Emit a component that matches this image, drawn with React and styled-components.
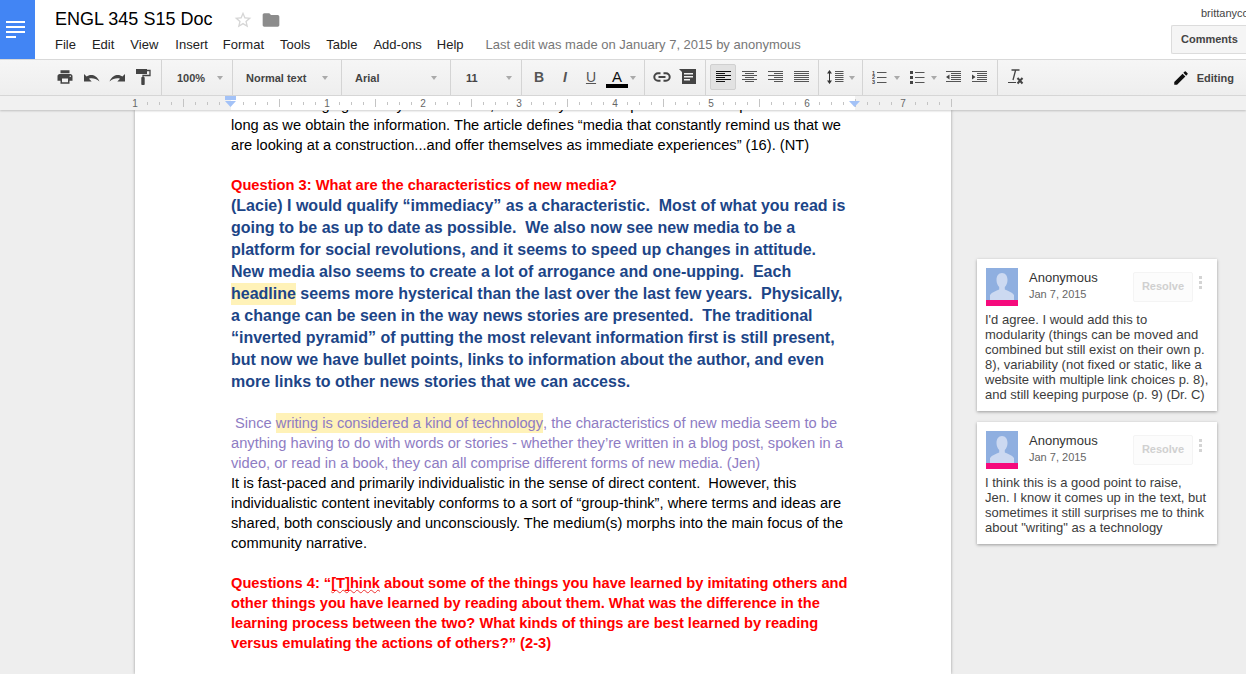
import React from 'react';
import styled, { createGlobalStyle } from 'styled-components';
import { MdPrint, MdEdit, MdStarBorder, MdFolder } from 'react-icons/md';

const GlobalStyle = createGlobalStyle`
  html, body {
    margin: 0;
    height: 100%;
    overflow: hidden;
    background: #eee;
    font-family: "Liberation Sans", Arial, sans-serif;
  }
`;

const Shell = styled.div`
  display: flex;
  flex-direction: column;
  height: 100vh;
`;

const Header = styled.header`
  display: flex;
  height: 59px;
  background: #fff;
  border-bottom: 1px solid #d9d9d9;
  flex: none;
`;

const DocsTile = styled.div`
  width: 35px;
  background: #4285f4;
  display: flex;
  flex-direction: column;
  justify-content: center;
  gap: 3px;
  padding-left: 6px;
  box-sizing: border-box;
`;

const TileLine = styled.span`
  display: block;
  height: 2px;
  width: ${(p) => p.$w}px;
  background: #fff;
`;

const TitleArea = styled.div`
  padding: 6px 0 0 20px;
  flex: 1;
`;

const TitleRow = styled.div`
  display: flex;
  align-items: center;
  height: 27px;
`;

const DocTitle = styled.div`
  font-size: 18px;
  color: #000;
  width: 178px;
`;

const Star = styled(MdStarBorder)`
  color: #d6d6d6;
`;

const Folder = styled(MdFolder)`
  color: #8c8c8c;
  margin-left: 8px;
`;

const MenuRow = styled.nav`
  display: flex;
  align-items: center;
  margin-top: 4px;
  font-size: 13px;
  color: #222;
`;

const MenuItem = styled.span`
  margin-right: ${(p) => p.$gap}px;
`;

const LastEdit = styled.span`
  color: #777;
  margin-left: 7px;
`;

const Account = styled.div`
  width: 75px;
  overflow: hidden;
`;

const UserName = styled.div`
  font-size: 11px;
  color: #444;
  white-space: nowrap;
  margin: 7px 0 0 30px;
  height: 18px;
`;

const CommentsButton = styled.div`
  box-sizing: border-box;
  height: 29px;
  background: #f5f5f5;
  border: 1px solid #dcdcdc;
  border-right: 0;
  border-radius: 2px 0 0 2px;
  font-size: 11px;
  font-weight: bold;
  color: #444;
  line-height: 27px;
  padding-left: 9px;
`;

const Toolbar = styled.div`
  display: flex;
  height: 36px;
  flex: none;
  box-sizing: border-box;
  padding-left: 52px;
  background: linear-gradient(#f6f6f6, #eeeeee);
  border-bottom: 1px solid #d9d9d9;
  color: #444;
`;

const Group = styled.div`
  display: flex;
  align-items: center;
  padding: 0 ${(p) => p.$right ?? 5}px 0 ${(p) => p.$left ?? 4}px;
  border-right: 1px solid ${(p) => (p.$plain ? 'transparent' : '#d4d4d4')};
`;

const IconButton = styled.div`
  box-sizing: border-box;
  width: 26px;
  height: 26px;
  margin-top: -1px;
  display: flex;
  align-items: center;
  justify-content: center;
  font-size: ${(p) => p.$size || 18}px;
  color: #444;
  border-radius: 2px;
  border: 1px solid ${(p) => (p.$active ? '#d0d0d0' : 'transparent')};
  background: ${(p) => (p.$active ? '#e2e2e2' : 'transparent')};
`;

const Select = styled.div`
  display: flex;
  align-items: center;
  justify-content: space-between;
  width: ${(p) => p.$w}px;
  box-sizing: border-box;
  padding: 0 ${(p) => p.$pr}px 0 ${(p) => p.$pl}px;
  font-size: 11px;
  font-weight: bold;
  color: #444;
`;

const Caret = styled.span`
  display: block;
  flex: none;
  width: 0;
  height: 0;
  margin: ${(p) => p.$m || '0'};
  border-left: 3.5px solid transparent;
  border-right: 3.5px solid transparent;
  border-top: 4px solid #aaa;
`;

const FormatLetter = styled.span`
  font-size: 14px;
  font-weight: ${(p) => (p.$bold ? 'bold' : 'normal')};
  font-style: ${(p) => (p.$italic ? 'italic' : 'normal')};
  text-decoration: ${(p) => (p.$under ? 'underline' : 'none')};
  color: #555;
`;

const ColorLetter = styled.span`
  display: block;
  width: 22px;
  text-align: center;
  font-size: 15px;
  line-height: 15px;
  color: #111;
  border-bottom: 4px solid #000;
  margin-top: 2px;
`;

const EditMode = styled.div`
  margin-left: auto;
  display: flex;
  align-items: center;
  gap: 7px;
  padding-right: 12px;
  font-size: 11px;
  font-weight: bold;
  color: #444;
`;

const RulerBar = styled.div`
  height: 14px;
  flex: none;
  background: #f1f1f1;
  position: relative;
  z-index: 2;
  box-shadow: 0 1px 2px rgba(0, 0, 0, 0.2);
`;

const Workspace = styled.main`
  flex: 1;
  min-height: 0;
  display: flex;
  overflow: hidden;
  padding-left: 135px;
  background: #eee;
`;

const Page = styled.article`
  width: 816px;
  flex: none;
  box-sizing: border-box;
  padding-left: 96px;
  background: #fff;
  box-shadow: 0 0 3px rgba(0, 0, 0, 0.35);
  overflow: hidden;
`;

const Para = styled.p`
  margin: ${(p) => p.$top || 0}px 0 0;
  font-size: ${(p) => (p.$big ? 16 : 14.67)}px;
  line-height: ${(p) => (p.$big ? 22 : 20)}px;
  font-weight: ${(p) => (p.$bold ? 'bold' : 'normal')};
  color: ${(p) => p.$color || '#000'};
  white-space: pre;
`;

const Mark = styled.span`
  display: inline-block;
  background: #fff2b8;
`;

const Misspelled = styled.span`
  text-decoration: underline wavy #e33;
  text-decoration-thickness: 1px;
  text-decoration-skip-ink: none;
`;

const CommentRail = styled.aside`
  display: flex;
  flex-direction: column;
  align-items: flex-start;
  gap: 11px;
  padding: 149px 0 0 26px;
`;

const Card = styled.div`
  box-sizing: border-box;
  width: 240px;
  background: #fff;
  padding: 9px 8px 9px;
  box-shadow: 0 1px 3px rgba(0, 0, 0, 0.35);
`;

const CardHead = styled.div`
  display: flex;
  align-items: flex-start;
  height: 38px;
  padding-left: 1px;
`;

const Avatar = styled.div`
  width: 32px;
  height: 38px;
  flex: none;
  border-bottom: 6px solid #f50a7c;
  box-sizing: border-box;
  background: #8fafe0;
  line-height: 0;
`;

const Author = styled.div`
  margin-left: 11px;
  width: 104px;
`;

const AuthorName = styled.div`
  font-size: 13px;
  line-height: 18px;
  margin-top: 1px;
  color: #333;
`;

const CommentDate = styled.div`
  font-size: 11px;
  line-height: 15px;
  color: #666;
`;

const ResolveButton = styled.div`
  box-sizing: border-box;
  width: 60px;
  height: 30px;
  margin-top: 4px;
  border: 1px solid #f4f4f4;
  border-radius: 2px;
  background: #fcfcfc;
  color: #d0d0d0;
  font-size: 11px;
  font-weight: bold;
  line-height: 26px;
  text-align: center;
`;

const MoreDots = styled.div`
  display: flex;
  flex-direction: column;
  gap: 2px;
  margin: 8px 0 0 6px;
`;

const Dot = styled.span`
  width: 3px;
  height: 3px;
  background: #d4d4d4;
`;

const CommentBody = styled.div`
  margin-top: 6px;
  font-size: 13px;
  line-height: 15px;
  color: #3c3c3c;
  white-space: pre;
`;

const rulerMarks = [];
for (let i = 0; i <= 68; i++) rulerMarks.push(135 + i * 12);
const rulerNumbers = [[135, 1], [327, 1], [423, 2], [519, 3], [615, 4], [711, 5], [807, 6], [903, 7]];

function Ruler() {
  return (
    <RulerBar>
      <svg width="1246" height="14">
        <rect x="231" y="0" width="624" height="14" fill="#fff" />
        {rulerMarks.map((x, i) => {
          if (i % 8 === 0) return null;
          const tall = i % 4 === 0;
          return (
            <line key={x} x1={x + 0.5} x2={x + 0.5} y1={tall ? 3 : 6} y2={tall ? 11 : 9} stroke="#c4c4c4" />
          );
        })}
        <line x1="951.5" x2="951.5" y1="3" y2="11" stroke="#c4c4c4" />
        {rulerNumbers.map(([x, n], i) => (
          <text key={i} x={x} y="11" fontSize="10" fill="#666" textAnchor="middle" fontFamily="Liberation Sans">{n}</text>
        ))}
        <rect x="225" y="0" width="11" height="4" fill="#a3c2f7" />
        <path d="M225 5h11l-5.500 6z" fill="#a3c2f7" />
        <path d="M849 5h11l-5.500 6z" fill="#a3c2f7" />
      </svg>
    </RulerBar>
  );
}

// rows of thin bars, each one [x, width]
function Bars({ rows, color = '#555' }) {
  return (
    <svg width="15" height="12" viewBox="0 0 15 12">
      {rows.map(([x, w], i) => (
        <rect key={i} x={x} y={i * 2} width={w} height="1" fill={color} />
      ))}
    </svg>
  );
}

const alignLeft = [[0, 15], [0, 9], [0, 15], [0, 9], [0, 15], [0, 9]];
const alignCenter = [[0, 15], [3, 9], [0, 15], [3, 9], [0, 15], [3, 9]];
const alignRight = [[0, 15], [6, 9], [0, 15], [6, 9], [0, 15], [6, 9]];
const alignFull = [[0, 15], [0, 15], [0, 15], [0, 15], [0, 15], [0, 15]];

function UndoIcon({ flip }) {
  return (
    <svg width="17" height="9" viewBox="0 0 17 9" transform={flip ? 'scale(-1 1)' : undefined}>
      <path d="M1 8.500V1l2.600 2.500C6.500 1.300 13 0.500 16.500 8.500 13 5.300 8.500 4.700 6 5.700L8.700 8.500z" fill="#444" />
    </svg>
  );
}

function RollerIcon() {
  return (
    <svg width="15" height="16" viewBox="0 0 15 16">
      <rect x="0" y="0" width="11" height="5" fill="#444" />
      <path d="M11 1.500h3v5H7v2" stroke="#444" strokeWidth="1.300" fill="none" />
      <rect x="5.300" y="8" width="3.400" height="8" rx="0.800" fill="#444" />
    </svg>
  );
}

function LinkIcon() {
  return (
    <svg width="18" height="10" viewBox="0 0 18 10">
      <path d="M7.500 1.300H5a3.700 3.700 0 000 7.400h2.500M10.500 1.300H13a3.700 3.700 0 010 7.400h-2.500M5.500 5h7" stroke="#444" strokeWidth="2" fill="none" />
    </svg>
  );
}

function CommentBoxIcon() {
  return (
    <svg width="18" height="16" viewBox="0 0 18 16">
      <path d="M0 0h17v15H3V3z" fill="#444" />
      <path d="M5 4h9v1.500H5zM5 7h9v1.500H5zM5 10h6v1.500H5z" fill="#f2f2f2" />
    </svg>
  );
}

function LineSpacingIcon() {
  return (
    <svg width="17" height="14" viewBox="0 0 17 14">
      <path d="M0 3.500L2.500 0 5 3.500zM0 10.500L2.500 14 5 10.500z" fill="#333" />
      <rect x="2" y="3" width="1" height="8" fill="#333" />
      {[1, 3, 5, 7, 9, 11].map((y) => (
        <rect key={y} x="8" y={y} width="8.500" height="1" fill="#555" />
      ))}
    </svg>
  );
}

function NumberedIcon() {
  return (
    <svg width="15" height="14" viewBox="0 0 15 14">
      {[1, 2, 3].map((n) => (
        <text key={n} x="0" y={n * 4.500} fontSize="5.500" fontWeight="bold" fill="#444" fontFamily="Liberation Sans">{n}</text>
      ))}
      {[2, 7, 12].map((y) => (
        <rect key={y} x="5" y={y} width="9.500" height="1" fill="#555" />
      ))}
    </svg>
  );
}

function BulletedIcon() {
  return (
    <svg width="15" height="14" viewBox="0 0 15 14">
      {[1, 6, 11].map((y) => (
        <rect key={y} x="0" y={y} width="3" height="3" fill="#444" />
      ))}
      {[2, 7, 12].map((y) => (
        <rect key={y} x="5" y={y} width="9.500" height="1" fill="#555" />
      ))}
    </svg>
  );
}

function IndentIcon({ increase }) {
  return (
    <svg width="15" height="12" viewBox="0 0 15 12">
      <path d={increase ? 'M0 3.500L3.500 6 0 8.500z' : 'M3.500 3.500L0 6l3.500 2.500z'} fill="#444" />
      <rect x="0" y="0" width="15" height="1" fill="#555" />
      {[2, 4, 6, 8].map((y) => (
        <rect key={y} x="5" y={y} width="10" height="1" fill="#555" />
      ))}
      <rect x="0" y="10" width="15" height="1" fill="#555" />
    </svg>
  );
}

function ClearFormatIcon() {
  return (
    <svg width="18" height="16" viewBox="0 0 18 16">
      <path d="M4.500 1h8M8.500 1.500L6 11" stroke="#444" strokeWidth="1.300" fill="none" />
      <path d="M1 13.500h8" stroke="#444" strokeWidth="1" />
      <path d="M10.500 9l5 5.500M15.500 9l-5 5.500" stroke="#444" strokeWidth="2" />
    </svg>
  );
}

function PersonIcon() {
  return (
    <svg width="32" height="32" viewBox="0 0 32 32">
      <path d="M16 5c3.600 0 5.500 3 5.500 7 0 3-1.200 5.500-2.700 7v2.500c3 1.500 7.200 2.500 9.200 5.500v5H4v-5c2-3 6.200-4 9.200-5.500V19c-1.500-1.500-2.700-4-2.700-7 0-4 1.900-7 5.500-7z" fill="#ccd9f1" />
    </svg>
  );
}

const comments = [
  {
    id: 1,
    text: "I'd agree. I would add this to\nmodularity (things can be moved and\ncombined but still exist on their own p.\n8), variability (not fixed or static, like a\nwebsite with multiple link choices p. 8),\nand still keeping purpose (p. 9) (Dr. C)",
  },
  {
    id: 2,
    text: 'I think this is a good point to raise,\nJen. I know it comes up in the text, but\nsometimes it still surprises me to think\nabout "writing" as a technology',
  },
];

const menus = [['File', 16], ['Edit', 16], ['View', 17], ['Insert', 15], ['Format', 16], ['Tools', 16], ['Table', 16], ['Add-ons', 15], ['Help', 15]];

export default function App() {
  return (
    <Shell>
      <GlobalStyle />
      <Header>
        <DocsTile>
          <TileLine $w={19} />
          <TileLine $w={19} />
          <TileLine $w={19} />
          <TileLine $w={10} />
        </DocsTile>
        <TitleArea>
          <TitleRow>
            <DocTitle>ENGL 345 S15 Doc</DocTitle>
            <Star size={20} />
            <Folder size={20} />
          </TitleRow>
          <MenuRow>
            {menus.map(([name, gap]) => (
              <MenuItem key={name} $gap={gap}>{name}</MenuItem>
            ))}
            <LastEdit>Last edit was made on January 7, 2015 by anonymous</LastEdit>
          </MenuRow>
        </TitleArea>
        <Account>
          <UserName>brittanycoombs</UserName>
          <CommentsButton>Comments</CommentsButton>
        </Account>
      </Header>

      <Toolbar>
        <Group $left={0}>
          <IconButton><MdPrint /></IconButton>
          <IconButton><UndoIcon /></IconButton>
          <IconButton><UndoIcon flip /></IconButton>
          <IconButton><RollerIcon /></IconButton>
        </Group>
        <Group $left={0} $right={0}>
          <Select $w={70} $pl={15} $pr={9}>100%<Caret /></Select>
        </Group>
        <Group $left={0} $right={0}>
          <Select $w={108} $pl={13} $pr={13}>Normal text<Caret /></Select>
        </Group>
        <Group $left={0} $right={0}>
          <Select $w={108} $pl={13} $pr={13}>Arial<Caret /></Select>
        </Group>
        <Group $left={0} $right={0}>
          <Select $w={70} $pl={15} $pr={9}>11<Caret /></Select>
        </Group>
        <Group>
          <IconButton><FormatLetter $bold>B</FormatLetter></IconButton>
          <IconButton><FormatLetter $bold $italic>I</FormatLetter></IconButton>
          <IconButton><FormatLetter $under>U</FormatLetter></IconButton>
          <IconButton><ColorLetter>A</ColorLetter></IconButton>
          <Caret $m="0 3px 0 0" />
        </Group>
        <Group $right={4}>
          <IconButton><LinkIcon /></IconButton>
          <IconButton><CommentBoxIcon /></IconButton>
        </Group>
        <Group $right={4}>
          <IconButton $active><Bars rows={alignLeft} color="#111" /></IconButton>
          <IconButton><Bars rows={alignCenter} /></IconButton>
          <IconButton><Bars rows={alignRight} /></IconButton>
          <IconButton><Bars rows={alignFull} /></IconButton>
        </Group>
        <Group $left={3} $right={7}>
          <IconButton><LineSpacingIcon /></IconButton>
          <Caret $m="0 0 0 1px" />
        </Group>
        <Group $left={3}>
          <IconButton><NumberedIcon /></IconButton>
          <Caret $m="0 4px 0 2px" />
          <IconButton><BulletedIcon /></IconButton>
          <Caret $m="0 3px 0 1px" />
          <IconButton><IndentIcon /></IconButton>
          <IconButton><IndentIcon increase /></IconButton>
        </Group>
        <Group $left={5} $plain>
          <IconButton><ClearFormatIcon /></IconButton>
        </Group>
        <EditMode><MdEdit size={18} color="#111" />Editing</EditMode>
      </Toolbar>

      <Ruler />

      <Workspace>
        <Page>
          <Para $top={-15}>{'media is changing the way that we think, and it may not be important what the process is as'}</Para>
          <Para>{'long as we obtain the information. The article defines “media that constantly remind us that we\nare looking at a construction...and offer themselves as immediate experiences” (16). (NT)'}</Para>
          <Para $top={20} $bold $color="#ff0000">Question 3: What are the characteristics of new media?</Para>
          <Para $big $bold $color="#1c4587">
            {'(Lacie) I would qualify “immediacy” as a characteristic.  Most of what you read is\ngoing to be as up to date as possible.  We also now see new media to be a\nplatform for social revolutions, and it seems to speed up changes in attitude.\nNew media also seems to create a lot of arrogance and one-upping.  Each\n'}
            <Mark>headline</Mark>
            {' seems more hysterical than the last over the last few years.  Physically,\na change can be seen in the way news stories are presented.  The traditional\n“inverted pyramid” of putting the most relevant information first is still present,\nbut now we have bullet points, links to information about the author, and even\nmore links to other news stories that we can access.'}
          </Para>
          <Para $top={20} $color="#8e7cc3">
            {' Since '}
            <Mark>writing is considered a kind of technology</Mark>
            {', the characteristics of new media seem to be\nanything having to do with words or stories - whether they’re written in a blog post, spoken in a\nvideo, or read in a book, they can all comprise different forms of new media. (Jen)'}
          </Para>
          <Para>{'It is fast-paced and primarily individualistic in the sense of direct content.  However, this\nindividualistic content inevitably conforms to a sort of “group-think”, where terms and ideas are\nshared, both consciously and unconsciously. The medium(s) morphs into the main focus of the\ncommunity narrative.'}</Para>
          <Para $top={20} $bold $color="#ff0000">
            {'Questions 4: “'}
            <Misspelled>[T]hink</Misspelled>
            {' about some of the things you have learned by imitating others and\nother things you have learned by reading about them. What was the difference in the\nlearning process between the two? What kinds of things are best learned by reading\nversus emulating the actions of others?” (2-3)'}
          </Para>
        </Page>
        <CommentRail>
          {comments.map((c) => (
            <Card key={c.id}>
              <CardHead>
                <Avatar><PersonIcon /></Avatar>
                <Author>
                  <AuthorName>Anonymous</AuthorName>
                  <CommentDate>Jan 7, 2015</CommentDate>
                </Author>
                <ResolveButton>Resolve</ResolveButton>
                <MoreDots><Dot /><Dot /><Dot /></MoreDots>
              </CardHead>
              <CommentBody>{c.text}</CommentBody>
            </Card>
          ))}
        </CommentRail>
      </Workspace>
    </Shell>
  );
}
